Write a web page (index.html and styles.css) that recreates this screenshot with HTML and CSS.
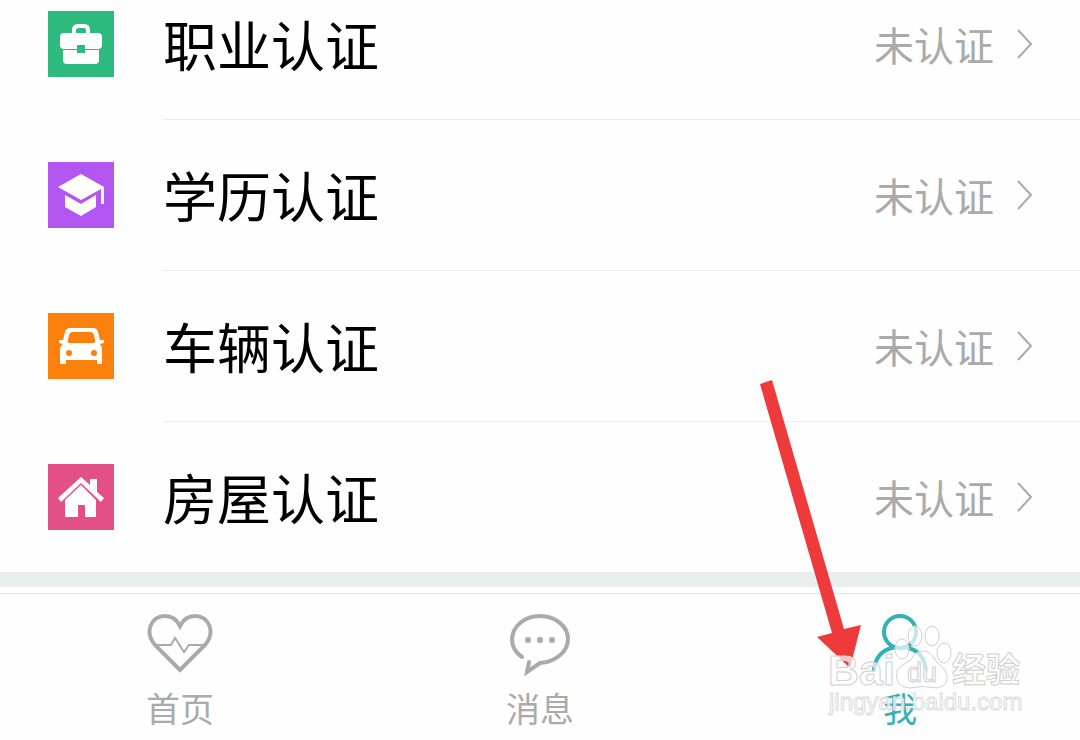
FILE: index.html
```
<!DOCTYPE html>
<html lang="zh-CN">

<head>
  <meta charset="UTF-8">
  <meta name="viewport" content="width=device-width, initial-scale=1.0">
  <title>我</title>
  <link rel="stylesheet" href="styles.css">
</head>

<body>
  <div class="page">
    <main class="list">
      <a class="row" href="#job">
        <svg class="badge green" viewBox="0 0 66 66">
          <path d="M26 23v-4q0-4 4-4h6q4 0 4 4v4" fill="none" stroke="#fff" stroke-width="4"/>
          <rect x="12" y="22" width="42" height="16" rx="4"/>
          <path d="M15 39h36v10q0 4-4 4H19q-4 0-4-4z"/>
          <rect class="hole" x="29" y="34" width="8" height="8"/>
        </svg>
        <span class="cell">
          <span class="name">职业认证</span>
          <span class="status">未认证</span>
          <svg class="chevron" viewBox="0 0 18 32"><path d="M2 2l13 14L2 30"/></svg>
        </span>
      </a>
      <a class="row" href="#school">
        <svg class="badge purple" viewBox="0 0 66 66">
          <path d="M10 25L33 12l23 13v17h-3V27L33 38z"/>
          <path d="M17 33l16 9 15-9v12l-15 9-16-9z"/>
        </svg>
        <span class="cell">
          <span class="name">学历认证</span>
          <span class="status">未认证</span>
          <svg class="chevron" viewBox="0 0 18 32"><path d="M2 2l13 14L2 30"/></svg>
        </span>
      </a>
      <a class="row" href="#car">
        <svg class="badge orange" viewBox="0 0 66 66">
          <path d="M22 15h23q4 0 5 4l2 8h4v3l-4 1q2 2 2 6v14h-5v-4H18v4h-6V37q0-4 3-6l-4-1v-3h4l2-8q1-4 5-4z"/>
          <path class="hole" d="M24 19h19q2 0 3 3l1 5q1 3-2 3H22q-3 0-2-3l1-5q1-3 3-3z"/>
          <circle class="hole" cx="21" cy="40" r="3"/>
          <circle class="hole" cx="46" cy="40" r="3"/>
        </svg>
        <span class="cell">
          <span class="name">车辆认证</span>
          <span class="status">未认证</span>
          <svg class="chevron" viewBox="0 0 18 32"><path d="M2 2l13 14L2 30"/></svg>
        </span>
      </a>
      <a class="row" href="#house">
        <svg class="badge pink" viewBox="0 0 66 66">
          <path d="M10 34l23-21 9 8v-6h7v13l7 6-3 4-20-19-20 19z"/>
          <path d="M17 36l16-15 15 15v17H37V41h-7v12H17z"/>
        </svg>
        <span class="cell">
          <span class="name">房屋认证</span>
          <span class="status">未认证</span>
          <svg class="chevron" viewBox="0 0 18 32"><path d="M2 2l13 14L2 30"/></svg>
        </span>
      </a>
    </main>

    <nav class="tabs">
      <a class="tab" href="#home">
        <svg class="tab-icon" viewBox="0 0 66 64">
          <path d="M33 58L8 33C-3 20 4 4 18 4c8 0 12 4 15 10C36 8 40 4 48 4c14 0 21 16 10 29z" stroke-width="4"/>
          <path d="M8 33h16l4-7 9 14 5-7h16" stroke-width="2"/>
        </svg>
        <span>首页</span>
      </a>
      <a class="tab" href="#message">
        <svg class="tab-icon" viewBox="0 0 66 64">
          <path d="M15 45C8 40 5 35 5 28 5 14 18 4 33 4s28 10 28 23-13 23-28 24L20 60l2-10" stroke-width="4" stroke-linecap="round"/>
          <g class="dots"><circle cx="21" cy="28" r="3"/><circle cx="33" cy="28" r="3"/><circle cx="45" cy="28" r="3"/></g>
        </svg>
        <span>消息</span>
      </a>
      <a class="tab active" href="#me">
        <svg class="tab-icon" viewBox="0 0 66 64">
          <circle cx="33" cy="20" r="16" stroke-width="4"/>
          <path d="M7 58q2-20 22-23M37 35q20 3 22 23" stroke-width="4" stroke-linecap="round"/>
        </svg>
        <span>我</span>
      </a>
    </nav>

    <svg class="arrow" viewBox="0 0 50 290">
      <path d="M3 4l12-4 72 249 17-4-11 43-33-31 15-4z"/>
    </svg>

    <svg class="watermark" viewBox="0 0 200 100">
      <text class="brand" x="0" y="65">Bai</text>
      <ellipse cx="74" cy="29" rx="7" ry="10"/>
      <ellipse cx="87" cy="16" rx="7" ry="10"/>
      <ellipse cx="104" cy="16" rx="7" ry="10"/>
      <ellipse cx="116" cy="33" rx="7" ry="10"/>
      <path d="M95 31q8 0 12 9l10 10q7 15-8 18-14-3-28 0-15-2-12-17 1-4 14-11 4-9 12-9z"/>
      <text class="du" x="79" y="62">du</text>
      <text class="cn" x="124" y="62">经验</text>
      <text class="site" x="1" y="90">jingyan.baidu.com</text>
    </svg>
  </div>
</body>

</html>
```
FILE: styles.css
```
body {
  margin: 0;
  background: #fefefe;
  font-family: "Noto Sans CJK SC", sans-serif;
  overflow: hidden;
}

a {
  color: inherit;
  text-decoration: none;
}

.page {
  display: flow-root;
  position: relative;
}

/* The list is scrolled up under the top edge */
.list {
  margin-top: -31px;
  border-bottom: 15px solid #eaefee;
}

.row {
  display: flex;
  align-items: flex-start;
  padding-left: 48px;
}

.badge {
  width: 66px;
  height: 66px;
  margin: 42px 49px 0 0;
  fill: #fff;
}

.green { background: #2eb97e; }
.green .hole { fill: #2eb97e; }
.purple { background: #b356f0; }
.orange { background: #fb800c; }
.orange .hole { fill: #fb800c; }
.pink { background: #e25085; }

.cell {
  flex: 1;
  display: flex;
  align-items: center;
  height: 150px;
  padding-right: 46px;
  border-bottom: 1px solid #ececec;
}

.row:last-child .cell {
  border-bottom: none;
}

.name {
  flex: 1;
  color: #000;
  font-size: 54px;
  line-height: 82px;
}

.status {
  color: #aaa;
  font-size: 40px;
}

.chevron {
  width: 18px;
  height: 32px;
  margin-left: 22px;
  fill: none;
  stroke: #aaa;
  stroke-width: 2;
}

/* Bottom tabs */
.tabs {
  display: grid;
  grid-template-columns: repeat(3, 1fr);
  margin-top: 6px;
  padding: 18px 0 8px;
  border-top: 1px solid #e6e8e8;
}

.tab {
  display: flex;
  flex-direction: column;
  align-items: center;
  gap: 8px;
  color: #aaa;
  font-size: 34px;
  line-height: 48px;
}

.tab-icon {
  width: 66px;
  height: 64px;
  fill: none;
  stroke: currentColor;
}

.dots {
  fill: currentColor;
  stroke: none;
}

.active {
  color: #35b0b5;
}

/* Overlays */
.arrow {
  position: absolute;
  top: 380px;
  right: 273px;
  width: 50px;
  height: 290px;
  overflow: visible;
  fill: #ee3a3a;
}

.watermark {
  position: absolute;
  top: 620px;
  right: 52px;
  width: 200px;
  height: 100px;
  fill: #fff;
  fill-opacity: 0.7;
  stroke: #d0d0d0;
  stroke-width: 1;
  font-family: "Liberation Sans", "Noto Sans CJK SC", sans-serif;
}

.brand {
  font-size: 43px;
  font-weight: bold;
}

.du {
  font-size: 27px;
}

.cn {
  font-size: 34px;
  font-weight: bold;
}

.site {
  font-size: 24px;
  stroke: #dcdcdc;
}
```
